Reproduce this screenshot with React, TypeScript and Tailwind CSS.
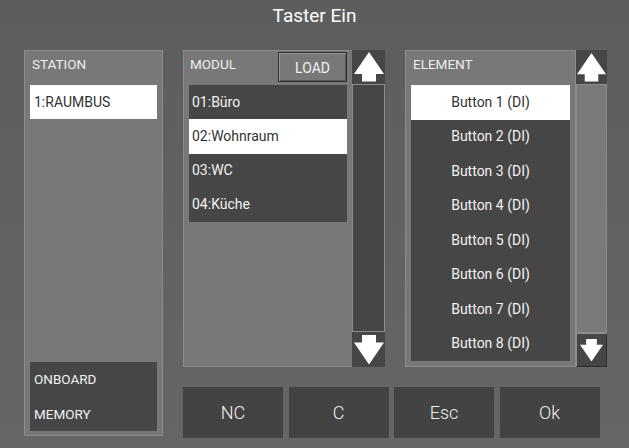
import React from "react";

const font = { fontFamily: "Roboto, 'Liberation Sans', sans-serif" };

const ArrowUp = ({ size = 30 }: { size?: number }) => (
  <svg width={size} height={size} viewBox="0 0 30 30">
    <polygon points="15,0 30,22 22,22 22,29.5 8,29.5 8,22 0,22" fill="#ffffff" />
  </svg>
);

const ArrowDown = ({ size = 30 }: { size?: number }) => (
  <svg width={size} height={size} viewBox="0 0 30 30">
    <polygon points="8,0 22,0 22,7.5 30,7.5 15,29.5 0,7.5 8,7.5" fill="#ffffff" />
  </svg>
);

const modules = ["01:Büro", "02:Wohnraum", "03:WC", "04:Küche"];
const elements = [1, 2, 3, 4, 5, 6, 7, 8].map((n) => `Button ${n} (DI)`);

export default function App() {
  const selectedModule = 1;
  const selectedElement = 0;

  return (
    <div
      className="w-[629px] h-[448px] bg-linear-to-b from-[#5d5d5d] to-[#666666] flex flex-col overflow-hidden"
      style={font}
    >
      {/* Title */}
      <div className="h-[50px] flex justify-center">
        <h1 className="text-[19px] leading-[22px] pt-[5px] text-white">Taster Ein</h1>
      </div>

      <div className="flex pl-[24px]">
        {/* Station */}
        <div className="w-[139px] h-[386px] border border-[#8c8c8c] bg-[#787878] flex flex-col px-[5px] pb-[4px]">
          <div className="h-[34px] pt-[6px] pl-[2px] text-[13.5px] leading-[14px] text-[#eeeeee]">
            STATION
          </div>
          <div className="h-[34px] bg-white flex items-center pl-[4px] text-[14px] text-[#333333]">
            1:RAUMBUS
          </div>
          <div className="mt-auto bg-[#464646] flex flex-col">
            <div className="h-[34.5px] flex items-center pl-[4px] text-[13.5px] text-[#f0f0f0]">
              ONBOARD
            </div>
            <div className="h-[34.5px] flex items-center pl-[4px] text-[13.5px] text-[#f0f0f0]">
              MEMORY
            </div>
          </div>
        </div>

        <div className="ml-[20px] flex flex-col">
          <div className="flex gap-[20px] h-[317px]">
            {/* Modul */}
            <div className="flex">
              <div className="w-[169px] border border-r-0 border-[#8c8c8c] bg-[#787878] flex flex-col pl-[5px] pr-[5px]">
                <div className="h-[34px] flex justify-between">
                  <span className="pt-[6px] pl-[1px] text-[13.5px] leading-[14px] text-[#eeeeee]">
                    MODUL
                  </span>
                  <button className="mt-[1px] w-[69px] h-[30px] border border-[#2e2e2e] bg-[#787878] shadow-[inset_1px_1px_0_#9c9c9c,inset_-1px_-1px_0_#5a5a5a] pt-[3px] text-[14px] text-[#f0f0f0]">
                    LOAD
                  </button>
                </div>
                <div className="bg-[#464646] flex flex-col">
                  {modules.map((m, i) => (
                    <div
                      key={m}
                      className={`h-[34.25px] flex items-center pl-[3px] text-[14px] ${
                        i === selectedModule ? "bg-white text-[#333333]" : "text-[#f2f2f2]"
                      }`}
                    >
                      {m}
                    </div>
                  ))}
                </div>
              </div>
              <div className="w-[33px] flex flex-col bg-[#464646]">
                <div className="h-[34px] flex items-center justify-center">
                  <ArrowUp />
                </div>
                <div className="flex-1 border border-[#8c8c8c]" />
                <div className="h-[35px] flex items-center justify-center">
                  <ArrowDown />
                </div>
              </div>
            </div>

            {/* Element */}
            <div className="flex">
              <div className="w-[170px] border border-r-0 border-[#8c8c8c] bg-[#787878] flex flex-col px-[5px]">
                <div className="h-[34px] pt-[6px] pl-[2px] text-[13.5px] leading-[14px] text-[#eeeeee]">
                  ELEMENT
                </div>
                <div className="bg-[#464646] flex flex-col">
                  {elements.map((e, i) => (
                    <div
                      key={e}
                      className={`h-[34.5px] flex items-center justify-center text-[14px] ${
                        i === selectedElement ? "bg-white text-[#333333]" : "text-[#f2f2f2]"
                      }`}
                    >
                      {e}
                    </div>
                  ))}
                </div>
              </div>
              <div className="w-[32px] flex flex-col border-l border-[#8c8c8c]">
                <div className="h-[34px] bg-[#464646] flex items-center justify-center">
                  <ArrowUp size={29} />
                </div>
                <div className="flex-1 bg-[#7a7a7a] border border-[#8c8c8c]" />
                <div className="h-[34px] bg-[#464646] border border-t-[#8e8e8e] border-l-[#8e8e8e] border-b-[#2c2c2c] border-r-[#2c2c2c] flex items-center justify-center">
                  <ArrowDown size={23} />
                </div>
              </div>
            </div>
          </div>

          {/* Bottom buttons */}
          <div className="mt-[20px] flex gap-[5.5px]">
            {["NC", "C", "Esc", "Ok"].map((label) => (
              <button
                key={label}
                className="w-[100px] h-[51px] bg-[#434343] text-[18px] font-light text-[#f0f0f0] flex items-center justify-center"
              >
                {label}
              </button>
            ))}
          </div>
        </div>
      </div>
    </div>
  );
}
